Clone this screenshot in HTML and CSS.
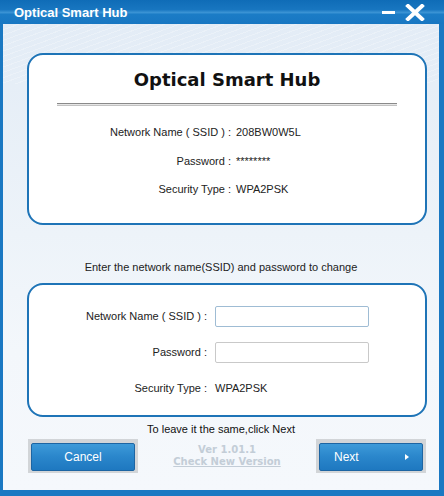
FILE: index.html
```html
<!DOCTYPE html>
<html lang="en">
<head>
    <meta charset="UTF-8">
    <title>Optical Smart Hub</title>
    <link rel="stylesheet" href="styles.css">
</head>
<body>
    <div class="window">
        <!-- Barra de título -->
        <div class="titlebar">
            <span class="app-name">Optical Smart Hub</span>
            <div class="win-buttons">
                <span class="minimize"></span>
                <svg class="close" width="20" height="17" viewBox="0 0 20 17">
                    <path d="M3 2 L17 15 M17 2 L3 15" stroke="#fff" stroke-width="4" stroke-linecap="square"/>
                </svg>
            </div>
        </div>

        <div class="client">
            <!-- Configuração atual -->
            <div class="card current">
                <h1>Optical Smart Hub</h1>
                <div class="double-line"></div>
                <div class="info-grid">
                    <span class="label">Network Name ( SSID ) :</span>
                    <span class="value">208BW0W5L</span>
                    <span class="label">Password :</span>
                    <span class="value">********</span>
                    <span class="label">Security Type :</span>
                    <span class="value">WPA2PSK</span>
                </div>
            </div>

            <p class="hint">Enter the network name(SSID) and password to change</p>

            <!-- Nova configuração -->
            <div class="card change">
                <div class="form-grid">
                    <label class="label" for="ssid">Network Name ( SSID ) :</label>
                    <input type="text" id="ssid" class="field field-focus">
                    <label class="label" for="pwd">Password :</label>
                    <input type="password" id="pwd" class="field">
                    <span class="label">Security Type :</span>
                    <span class="value">WPA2PSK</span>
                </div>
            </div>

            <p class="note">To leave it the same,click Next</p>

            <div class="footer">
                <div class="btn-frame">
                    <button class="btn btn-cancel">Cancel</button>
                </div>
                <div class="version">
                    <span>Ver 1.01.1</span>
                    <a href="#">Check New Version</a>
                </div>
                <div class="btn-frame">
                    <button class="btn btn-next">Next <span class="arrow"></span></button>
                </div>
            </div>
        </div>
    </div>
</body>
</html>
```

FILE: styles.css
```css
body {
    margin: 0;
    padding: 0;
    font-family: "Liberation Sans", Arial, sans-serif;
}

.window {
    width: 444px;
    height: 496px;
    display: flex;
    flex-direction: column;
    background-color: #1a78c2;
}

.titlebar {
    height: 24px;
    flex-shrink: 0;
    display: flex;
    align-items: center;
    justify-content: space-between;
    padding: 0 19px 0 14px;
    background: linear-gradient(#0f6cb7 0%, #1876c0 40%, #3a93d4 52%, #1b7cc6 60%, #1877c2 100%);
}

.app-name {
    color: #fff;
    font-weight: bold;
    font-size: 13px;
}

.win-buttons {
    display: flex;
    align-items: center;
    gap: 10px;
}

.minimize {
    display: block;
    width: 13px;
    height: 3px;
    margin-top: 1px;
    background-color: #fff;
}

.close {
    display: block;
}

.client {
    flex: 1;
    margin: 0 5px 6px 3px;
    display: flex;
    flex-direction: column;
    background:
        repeating-linear-gradient(160deg, rgba(255, 255, 255, 0.25) 0 1px, transparent 1px 5px) top / 100% 60px no-repeat,
        linear-gradient(#e3ecf6 0%, #edf3f9 45%, #f3f7fb 70%, #f5f8fc 100%);
}

.card {
    box-sizing: border-box;
    width: 400px;
    margin-left: 24px;
    background-color: #fff;
    border: 2px solid #1e74b7;
    border-radius: 16px;
}

.current {
    height: 172px;
    margin-top: 29px;
    padding-top: 13px;
    display: flex;
    flex-direction: column;
    align-items: center;
}

h1 {
    margin: 0;
    font-family: "DejaVu Sans", Verdana, sans-serif;
    font-size: 18px;
    line-height: 24px;
    font-weight: bold;
    color: #111;
}

.double-line {
    width: 340px;
    height: 1px;
    margin-top: 11px;
    border-top: 1px solid #8a8a8a;
    border-bottom: 1px solid #c2c2c2;
    background-color: #e6e6e6;
}

.info-grid {
    display: grid;
    grid-template-columns: 202px 160px;
    grid-auto-rows: 28.5px;
    column-gap: 5px;
    align-items: center;
    margin-top: 12px;
    align-self: flex-start;
    font-size: 11px;
    color: #222;
}

.label {
    text-align: right;
    font-size: 11px;
    color: #222;
}

.value {
    font-size: 11px;
    color: #222;
}

.hint {
    margin: 35px 0 0 0;
    text-align: center;
    font-size: 11px;
    line-height: 14px;
    color: #222;
}

.change {
    height: 134px;
    margin-top: 9px;
    padding-top: 13px;
}

.form-grid {
    display: grid;
    grid-template-columns: 178px 154px;
    grid-auto-rows: 36px;
    column-gap: 8px;
    align-items: center;
}

.field {
    box-sizing: border-box;
    width: 154px;
    height: 21px;
    margin: 0;
    border: 1px solid #c9c9c9;
    border-radius: 2px;
    background-color: #fff;
    outline: none;
}

.field-focus {
    border-color: #9fbcd4;
}

.note {
    margin: 5px 0 0 0;
    text-align: center;
    font-size: 11px;
    line-height: 14px;
    color: #111;
}

.footer {
    display: flex;
    justify-content: space-between;
    align-items: center;
    margin: 3px 13px 0 25px;
}

.btn-frame {
    padding: 4px 3px 2px 3px;
    background-color: #d2d5d8;
}

.btn {
    display: flex;
    align-items: center;
    box-sizing: border-box;
    width: 104px;
    height: 28px;
    border: 1px solid #1d65a3;
    border-radius: 2px;
    background: linear-gradient(#3d9ad9 0%, #2a86cb 50%, #1e78c0 100%);
    color: #fff;
    font-family: "Liberation Sans", Arial, sans-serif;
    font-size: 12px;
    cursor: pointer;
}

.btn-cancel {
    justify-content: center;
}

.btn-next {
    justify-content: space-between;
    padding: 0 13px 0 14px;
}

.arrow {
    width: 0;
    height: 0;
    border-top: 3.5px solid transparent;
    border-bottom: 3.5px solid transparent;
    border-left: 4px solid #fff;
}

.version {
    display: flex;
    flex-direction: column;
    align-items: center;
    font-family: "DejaVu Sans", Verdana, sans-serif;
    font-size: 10px;
    font-weight: bold;
    line-height: 12px;
    color: #c3cdd7;
}

.version a {
    color: #c3cdd7;
    text-decoration: underline;
}
```
